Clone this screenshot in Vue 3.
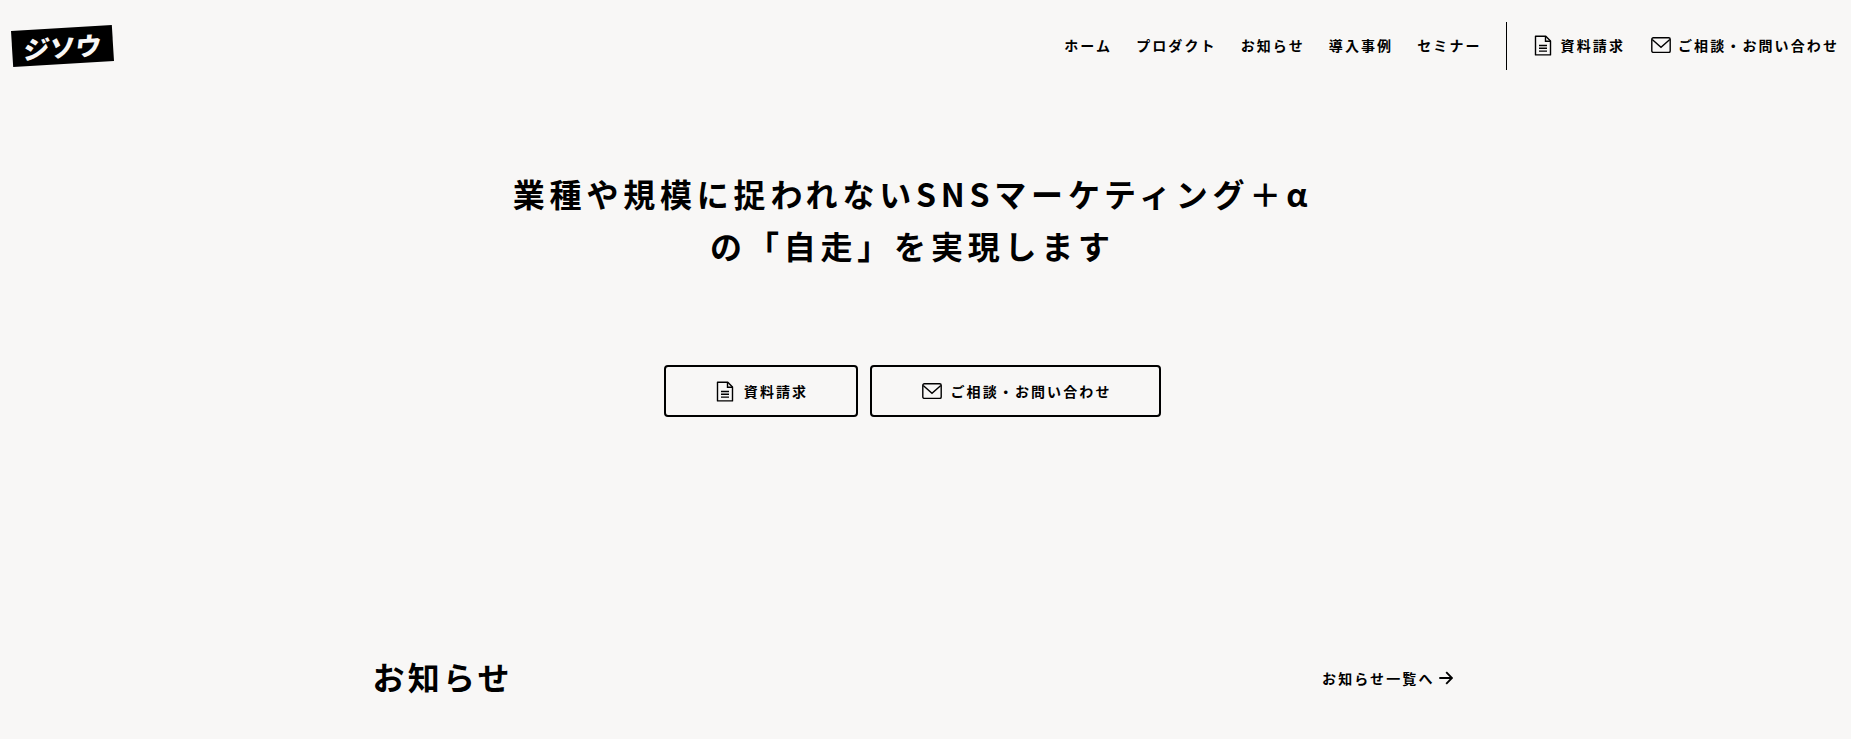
<script setup>
const nav = ['ホーム', 'プロダクト', 'お知らせ', '導入事例', 'セミナー']
</script>

<template>
  <div class="page">
    <header class="header">
      <div class="logo"><span class="logo-text">ジソウ</span></div>
      <nav class="nav">
        <a v-for="n in nav" :key="n" class="nav-link">{{ n }}</a>
        <span class="divider"></span>
        <a class="nav-link icon-link link-doc">
          <svg viewBox="0 0 18 21" width="18" height="21" fill="none" stroke="#000" stroke-width="1.4">
            <path d="M1.5 1.2h10.3l4.7 4.7v14h-15z" stroke-linejoin="round" />
            <path d="M11.5 1.2v5h5M5 10.5h8M5 13.3h8M5 16.1h8" />
          </svg>
          資料請求
        </a>
        <a class="nav-link icon-link link-mail">
          <svg viewBox="0 0 20 16" width="20" height="16" fill="none" stroke="#000" stroke-width="1.4">
            <rect x="0.8" y="0.8" width="18.4" height="14.6" rx="1.5" />
            <path d="M1.2 2.5 10 10.2l8.8-7.7" />
          </svg>
          ご相談・お問い合わせ
        </a>
      </nav>
    </header>

    <main class="content">
      <section class="hero">
        <h1 class="title">業種や規模に捉われないSNSマーケティング＋α<br />の「自走」を実現します</h1>
        <div class="actions">
          <a class="btn btn-doc">
            <svg viewBox="0 0 18 21" width="18" height="21" fill="none" stroke="#000" stroke-width="1.4">
              <path d="M1.5 1.2h10.3l4.7 4.7v14h-15z" stroke-linejoin="round" />
              <path d="M11.5 1.2v5h5M5 10.5h8M5 13.3h8M5 16.1h8" />
            </svg>
            資料請求
          </a>
          <a class="btn btn-mail">
            <svg viewBox="0 0 20 16" width="20" height="16" fill="none" stroke="#000" stroke-width="1.4">
              <rect x="0.8" y="0.8" width="18.4" height="14.6" rx="1.5" />
              <path d="M1.2 2.5 10 10.2l8.8-7.7" />
            </svg>
            ご相談・お問い合わせ
          </a>
        </div>
      </section>

      <section class="news">
        <h2 class="news-title">お知らせ</h2>
        <a class="news-link">
          お知らせ一覧へ
          <svg viewBox="0 0 14 14" width="14" height="14" fill="none" stroke="#000" stroke-width="1.9">
            <path d="M0.3 7h12.5M7.2 1.2 13 7l-5.8 5.8" />
          </svg>
        </a>
      </section>
    </main>
  </div>
</template>

<style>
html, body { margin: 0; background: #f8f7f6; overflow: hidden; }
</style>

<style scoped>
.page {
  height: 739px;
  overflow: hidden;
  background: #f8f7f6;
  color: #000;
  font-family: "Noto Sans CJK JP", "Noto Sans", sans-serif;
  font-weight: 700;
}
.header {
  display: flex;
  align-items: center;
  justify-content: space-between;
  height: 92px;
  padding: 0 12px 0 12px;
}
.logo {
  width: 101px;
  height: 36px;
  background: #000;
  transform: rotate(-3.5deg);
  display: flex;
  align-items: center;
  justify-content: center;
}
.logo-text {
  color: #f8f7f6;
  font-size: 25px;
  font-weight: 900;
  line-height: 1;
  transform: skewX(-10deg) scaleX(1.04);
}
.nav {
  display: flex;
  align-items: center;
  gap: 24px;
}
.nav-link {
  font-size: 14px;
  letter-spacing: 2.1px;
  line-height: 20px;
  display: flex;
  align-items: center;
  gap: 7px;
  white-space: nowrap;
  padding-bottom: 2px;
}
.link-doc { gap: 9px; }
.link-mail { margin-left: 2px; }
.divider {
  width: 1px;
  height: 48px;
  background: #000;
  margin-right: 3px;
}
.content {
  width: 1825px;
}
.hero {
  display: flex;
  flex-direction: column;
  align-items: center;
  padding-top: 75px;
}
.title {
  margin: 0;
  font-size: 32px;
  line-height: 52px;
  letter-spacing: 4.8px;
  font-weight: 700;
  text-align: center;
}
.actions {
  display: flex;
  gap: 12px;
  margin-top: 94px;
}
.btn {
  box-sizing: border-box;
  height: 52px;
  border: 2px solid #000;
  border-radius: 4px;
  padding-left: 2px;
  display: flex;
  align-items: center;
  justify-content: center;
  gap: 9px;
  font-size: 14px;
  letter-spacing: 2.1px;
}
.btn-doc { width: 194px; gap: 10px; }
.btn-mail { width: 291px; }
.news {
  width: 1080px;
  margin: 0 auto;
  padding-top: 235px;
  display: flex;
  align-items: center;
  justify-content: space-between;
}
.news-title {
  margin: 0;
  font-size: 32px;
  line-height: 48px;
  letter-spacing: 0.1em;
  font-weight: 700;
}
.news-link {
  font-size: 14px;
  letter-spacing: 2.1px;
  display: flex;
  align-items: center;
  gap: 4px;
  margin-top: 3px;
}
</style>
